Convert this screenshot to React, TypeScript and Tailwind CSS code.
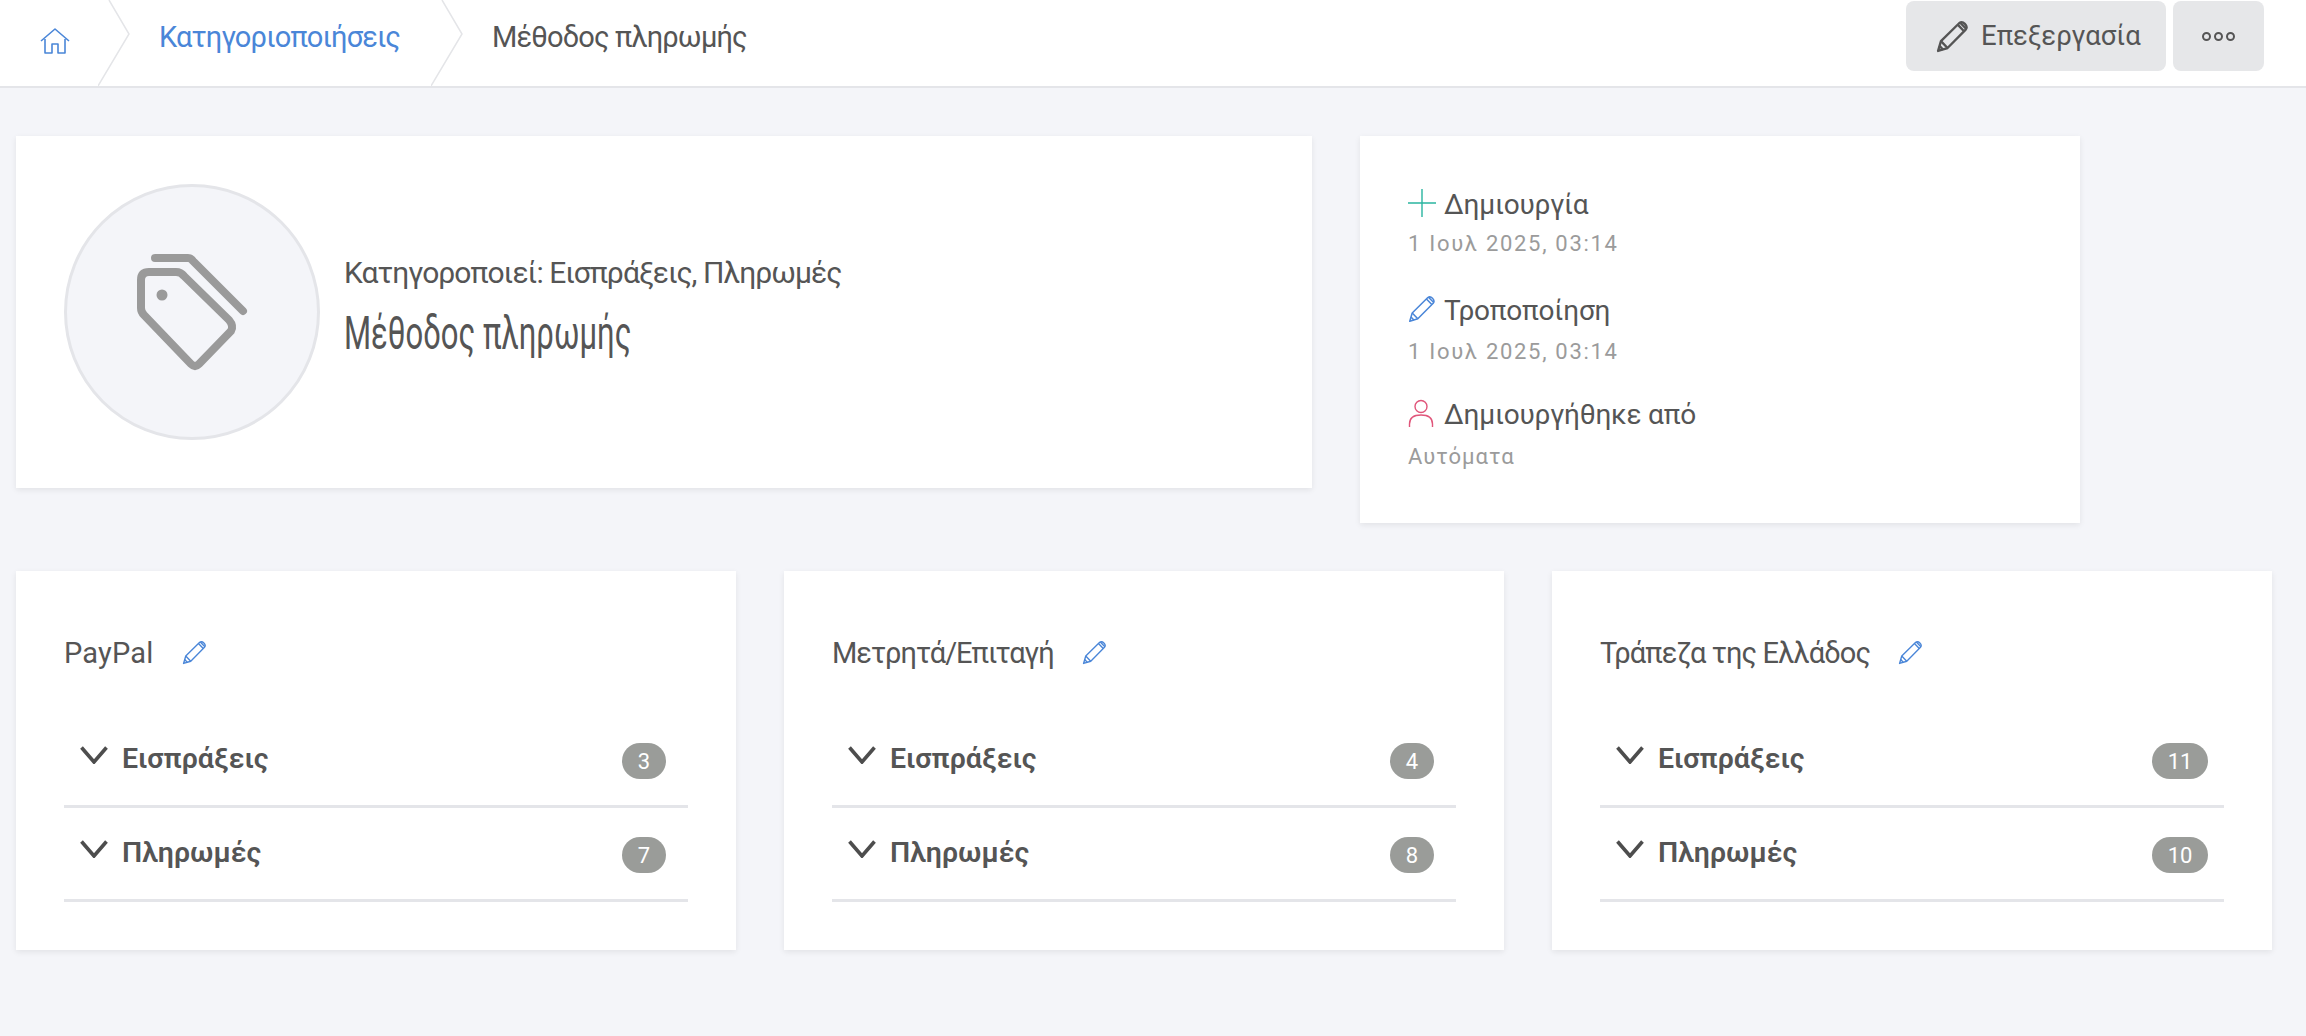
const sans = "font-['Roboto',sans-serif]";

const Pencil = ({ className, weight = 1.3 }: { className: string; weight?: number }) => (
  <svg viewBox="0 0 24 24" fill="none" stroke="currentColor" strokeWidth={weight} strokeLinejoin="round" className={className}>
    <path d="M1.5 22.5 L3.6 15.4 L17 2.2 Q19 0.8 21 2.8 Q23.2 5 21.6 7 L8.4 20.4 Z" />
    <path d="M3.6 15.4 L8.4 20.4 M2.6 18.8 L5.2 21.6 M15.8 3.4 L20.4 8.2 M17.6 2 L22 6.4" />
  </svg>
);

const AccordionRow = ({ label, count }: { label: string; count: number }) => (
  <div className="flex h-[94px] items-center border-b-[3px] border-[#e4e5e9] pl-4">
    <svg viewBox="0 0 28 18" fill="none" stroke="#4d4d4d" strokeWidth="3.6" className="mb-[9px] h-[18px] w-7 shrink-0">
      <path d="M1.5 1.5 L14 16 L26.5 1.5" />
    </svg>
    <span className="ml-3.5 flex-1 text-[28.5px] font-semibold text-[#555]">{label}</span>
    <div className="mt-[3px] flex w-[88px] justify-center">
      <span className="flex h-9 min-w-[42px] items-center justify-center rounded-[18px] bg-[#9a9c99] px-4 text-[22px] text-white">
        {count}
      </span>
    </div>
  </div>
);

const MethodCard = ({ title, titleClass, inCount, outCount }: { title: string; titleClass: string; inCount: number; outCount: number }) => (
  <div className="w-[720px] bg-white p-12 shadow-[0_2px_6px_rgba(0,0,0,0.08)]">
    <div className="mb-[25px] flex h-[70px] items-center gap-7">
      <span className={`text-[29px] text-[#555] ${titleClass}`}>{title}</span>
      <Pencil className="mb-1 h-[25px] w-[25px] text-[#4a86d8]" />
    </div>
    <AccordionRow label="Εισπράξεις" count={inCount} />
    <AccordionRow label="Πληρωμές" count={outCount} />
  </div>
);

const Separator = () => (
  <svg viewBox="0 0 32 86" fill="none" stroke="#e4e5e8" strokeWidth="1.5" className="h-[86px] w-8 shrink-0">
    <path d="M11 0 L31 34 L0 86" />
  </svg>
);

export default function App() {
  return (
    <div className={`min-h-[1036px] bg-[#f4f5f9] ${sans}`}>
      {/* Top bar */}
      <header className="flex h-[88px] items-start justify-between border-b-2 border-[#e4e5e9] bg-white">
        <nav className="flex h-[86px] items-center text-[29px] tracking-[-0.85px]">
          <div className="flex w-[98px] justify-start pl-10">
            <svg viewBox="0 0 30 26" fill="none" stroke="#4a86d8" strokeWidth="1.6" strokeLinejoin="round" className="mb-1 h-[26px] w-[30px]">
              <path d="M1 13 L15 1 L29 13 M5 11 V25 H12 V16 H18 V25 H25 V11" />
            </svg>
          </div>
          <Separator />
          <span className="mb-[10px] ml-[29px] w-[241px] whitespace-nowrap text-[#4a86d8]">Κατηγοριοποιήσεις</span>
          <div className="ml-[31px]">
            <Separator />
          </div>
          <span className="mb-[10px] ml-[29px] whitespace-nowrap text-[#555]">Μέθοδος πληρωμής</span>
        </nav>
        <div className="mr-[42px] mt-px flex gap-[7px]">
          <button className="flex h-[70px] w-[260px] items-center gap-3 rounded-lg bg-[#e6e7e9] pl-[30px] text-[27.5px] text-[#555]">
            <Pencil className="h-[33px] w-[33px]" weight={1.7} />
            Επεξεργασία
          </button>
          <button className="flex h-[70px] w-[91px] items-center justify-center gap-[3px] rounded-lg bg-[#e6e7e9]">
            <span className="h-[9px] w-[9px] rounded-full border-2 border-[#555]" />
            <span className="h-[9px] w-[9px] rounded-full border-2 border-[#555]" />
            <span className="h-[9px] w-[9px] rounded-full border-2 border-[#555]" />
          </button>
        </div>
      </header>

      <main className="px-4 pt-12">
        <div className="flex items-start gap-12">
          {/* Category summary */}
          <section className="flex h-[352px] w-[1296px] items-center bg-white pl-12 shadow-[0_2px_6px_rgba(0,0,0,0.08)]">
            <div className="flex h-64 w-64 items-center justify-center rounded-full border-[3px] border-[#e4e5e9] bg-[#f4f5f9]">
              <svg viewBox="130 248 124 124" fill="none" stroke="#9a9a9a" strokeWidth="8" strokeLinecap="round" strokeLinejoin="round" className="h-[124px] w-[124px]">
                <path d="M149 270 H176 Q181 270 184 274 L229 318 Q234 324 231 329 L199 362 Q195 366 191 362 L144 313 Q141 310 141 306 V278 Q141 270 149 270 Z" />
                <path d="M155 256 H188 Q191 256 193 259 L243 309" />
                <circle cx="162" cy="293" r="5.5" fill="#9a9a9a" stroke="none" />
              </svg>
            </div>
            <div className="mb-2 ml-6">
              <p className="-mt-1 text-[30px] leading-[36px] tracking-[-0.95px] text-[#555]">Κατηγοροποιεί: Εισπράξεις, Πληρωμές</p>
              <h1 className="mt-[18px] origin-left scale-x-[0.675] whitespace-nowrap text-[46px] leading-[48px] text-[#555]">
                Μέθοδος πληρωμής
              </h1>
            </div>
          </section>

          {/* Audit info */}
          <section className="w-[720px] bg-white px-12 pb-[49px] pt-12 shadow-[0_2px_6px_rgba(0,0,0,0.08)]">
            <div className="flex h-[42px] items-center gap-2 text-[28px] tracking-[-0.2px] text-[#555]">
              <svg viewBox="0 0 28 28" fill="none" stroke="#2ab5a0" strokeWidth="1.4" className="mb-1 h-7 w-7">
                <path d="M14 0 V28 M0 14 H28" />
              </svg>
              Δημιουργία
            </div>
            <p className="-mt-px flex h-9 items-center text-[22px] tracking-[1.7px] text-[#9b9b9b]">1 Ιουλ 2025, 03:14</p>
            <div className="mt-[29px] flex h-[42px] items-center gap-2 text-[28px] tracking-[-0.2px] text-[#555]">
              <Pencil className="mb-1 h-7 w-7 text-[#4a86d8]" />
              Τροποποίηση
            </div>
            <p className="mt-px flex h-9 items-center text-[22px] tracking-[1.7px] text-[#9b9b9b]">1 Ιουλ 2025, 03:14</p>
            <div className="mt-[25px] flex h-[42px] items-center gap-2 text-[28px] tracking-[-0.2px] text-[#555]">
              <svg viewBox="0 0 28 28" fill="none" stroke="#e0557a" strokeWidth="1.4" className="mb-1 h-7 w-7">
                <circle cx="13" cy="7.5" r="6" />
                <path d="M1.5 28 V25 Q1.5 16 13 16 Q24.5 16 24.5 25 V28" />
              </svg>
              Δημιουργήθηκε από
            </div>
            <p className="mt-0.5 flex h-9 items-center text-[22px] tracking-[1px] text-[#9b9b9b]">Αυτόματα</p>
          </section>
        </div>

        {/* Payment methods */}
        <div className="mt-12 flex gap-12">
          <MethodCard title="PayPal" titleClass="tracking-[0.2px]" inCount={3} outCount={7} />
          <MethodCard title="Μετρητά/Επιταγή" titleClass="tracking-[-1px]" inCount={4} outCount={8} />
          <MethodCard title="Τράπεζα της Ελλάδος" titleClass="tracking-[-0.9px]" inCount={11} outCount={10} />
        </div>
      </main>
    </div>
  );
}
